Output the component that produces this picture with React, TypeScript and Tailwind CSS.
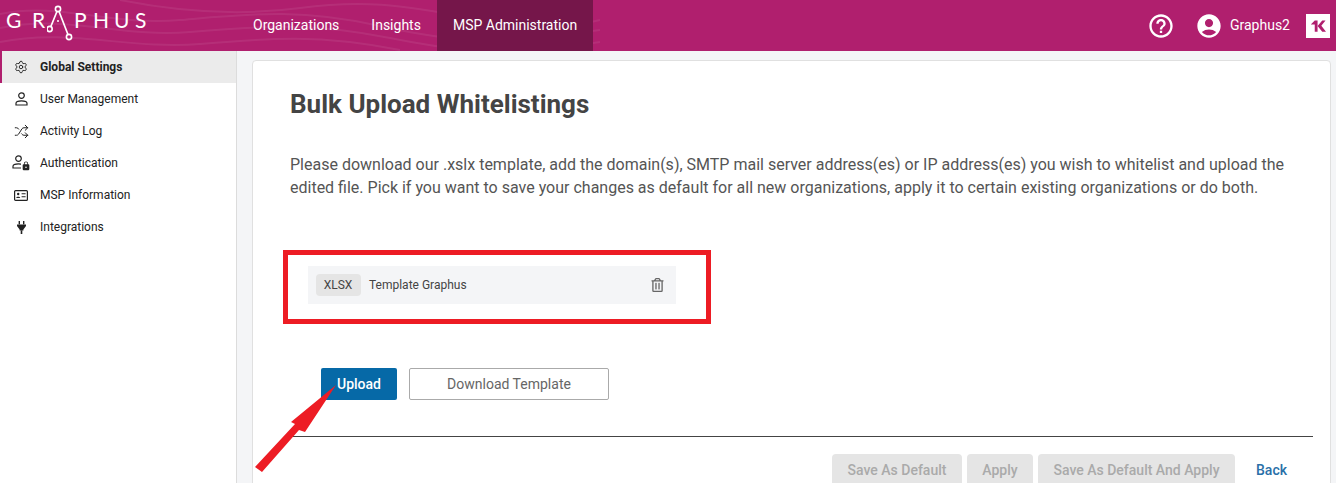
import { Settings, Shuffle } from 'lucide-react';
import { MdHelpOutline, MdAccountCircle, MdLock } from 'react-icons/md';
import { FaRegTrashAlt } from 'react-icons/fa';

function UserIcon() {
  return (
    <svg className="w-[13px] h-[14px] shrink-0" viewBox="0 0 13 14" fill="none" stroke="currentColor" strokeWidth="1.2">
      <circle cx="6.5" cy="3.6" r="2.8" />
      <path d="M1 13 V11.2 C1 9.6 3.4 8.8 6.5 8.8 S12 9.6 12 11.2 V13 Z" />
    </svg>
  );
}

function UserLockIcon() {
  return (
    <span className="relative flex w-[16px] h-[14px] shrink-0">
      <span className="absolute left-[-1px] top-[-1px]">
        <UserIcon />
      </span>
      <MdLock className="absolute right-[-2px] bottom-[-1px] w-[10px] h-[10px] bg-white" />
    </span>
  );
}

function CardIcon() {
  return (
    <svg className="w-[14px] h-[11px] shrink-0" viewBox="0 0 14 11" fill="none" stroke="currentColor">
      <rect x="0.6" y="0.6" width="12.8" height="9.8" rx="1" strokeWidth="1.2" />
      <circle cx="4.2" cy="4" r="1.2" fill="currentColor" stroke="none" />
      <path d="M2.2 8 C2.2 6.4 6.2 6.4 6.2 8 Z" fill="currentColor" stroke="none" />
      <path d="M7.6 3.8 H11.6 M7.6 6.8 H11.6" strokeWidth="1.1" />
    </svg>
  );
}

function PlugIcon() {
  return (
    <svg className="w-[9px] h-[13px] shrink-0" viewBox="0 0 9 13" fill="currentColor">
      <rect x="1.6" y="0" width="1.4" height="3.4" />
      <rect x="6" y="0" width="1.4" height="3.4" />
      <path d="M0 3.4 H9 V5 L6.4 8.6 V9.4 H2.6 V8.6 L0 5 Z" />
      <rect x="3.7" y="9.4" width="1.6" height="3.6" />
    </svg>
  );
}

const navItems = [
  { label: 'Global Settings', icon: <Settings className="w-[14px] h-[14px] shrink-0" strokeWidth={1.6} />, active: true },
  { label: 'User Management', icon: <UserIcon /> },
  { label: 'Activity Log', icon: <Shuffle className="w-[15px] h-[15px] shrink-0" strokeWidth={1.6} /> },
  { label: 'Authentication', icon: <UserLockIcon /> },
  { label: 'MSP Information', icon: <CardIcon /> },
  { label: 'Integrations', icon: <PlugIcon /> },
];

function HeaderWaves() {
  return (
    <svg className="absolute left-0 top-0 w-[600px] h-[51px]" viewBox="0 0 600 51" fill="none" stroke="#fff" strokeOpacity="0.07" strokeWidth="2">
      <path d="M0 14 C60 2 110 26 180 20 S300 8 380 26 S500 44 600 30" />
      <path d="M0 28 C70 14 120 38 190 32 S310 22 390 38 S510 56 600 42" />
      <path d="M0 42 C70 28 130 50 200 44 S320 34 400 50" />
      <path d="M120 0 C180 12 240 16 300 8 S400 4 470 18 S560 30 600 20" />
    </svg>
  );
}

function LogoA() {
  return (
    <svg className="w-[28px] h-[42px] shrink-0" viewBox="0 0 28 42" fill="none" stroke="#fff" strokeWidth="1.6">
      <circle cx="11" cy="9" r="2.6" />
      <circle cx="2.6" cy="29" r="2.6" />
      <circle cx="22" cy="37" r="2.6" />
      <path d="M10 11.4 L3.8 26.6 M12 11.4 L21 34.6" />
      <circle cx="11" cy="21" r="1" fill="#fff" stroke="none" />
    </svg>
  );
}

function KLogo() {
  return (
    <div className="w-6 h-6 bg-white flex items-center justify-center">
      <svg className="w-[15px] h-[12px]" viewBox="0 0 16 12" fill="#b01f6e">
        <path d="M0 4 L4 0 H7 V12 H4 V4.5 H0 Z" />
        <path d="M7 6 L12 0 H15.5 L11 5.8 L16 12 H12 Z" />
      </svg>
    </div>
  );
}

export default function App() {
  return (
    <div className="relative w-[1336px] h-[483px] overflow-hidden bg-[#f4f5f7] font-['Roboto',sans-serif]">
      {/* Header */}
      <header className="relative h-[51px] bg-[#b01f6e] flex items-center text-white overflow-hidden">
        <HeaderWaves />
        <div className="relative w-[237px] mb-[9px] pl-[6px] flex items-center font-['Lato',sans-serif] text-[21px] text-white">
          <span className="w-[26px] pb-[3px]">G</span>
          <span className="w-[15px] pb-[3px]">R</span>
          <LogoA />
          <span className="w-[19px] pb-[3px] -ml-[1px]">P</span>
          <span className="w-[21px] pb-[3px]">H</span>
          <span className="w-[21px] pb-[3px]">U</span>
          <span className="pb-[3px]">S</span>
        </div>
        <nav className="relative flex h-full text-[14px]">
          <a className="px-4 flex items-center">Organizations</a>
          <a className="px-4 flex items-center">Insights</a>
          <a className="px-4 flex items-center bg-[#75164a]">MSP Administration</a>
        </nav>
        <div className="relative ml-auto flex items-center pr-[6px]">
          <MdHelpOutline className="w-7 h-7" />
          <MdAccountCircle className="w-7 h-7 ml-5" />
          <span className="text-[14px] ml-[7px] mr-[16px]">Graphus2</span>
          <KLogo />
        </div>
      </header>

      <div className="flex h-[432px]">
        {/* Sidebar */}
        <aside className="w-[237px] shrink-0 bg-white border-r border-[#dcdcdc] text-[12px] text-[#222]">
          {navItems.map((item) => (
            <div
              key={item.label}
              className={
                item.active
                  ? 'h-8 flex items-center bg-[#ebebeb] border-l-2 border-[#b01f6e] pl-3 font-bold'
                  : 'h-8 flex items-center border-l-2 border-transparent pl-3'
              }
            >
              <span className="w-[14px] flex justify-center">{item.icon}</span>
              <span className="ml-3">{item.label}</span>
            </div>
          ))}
        </aside>

        {/* Main card */}
        <main className="flex-1 pl-[15px] pr-[5px] pt-[9px]">
          <div className="h-[500px] bg-white border border-[#e0e0e0] rounded-sm pl-[37px] pr-[17px]">
            <h1 className="mt-[27px] text-[26px] leading-[32px] font-bold text-[#444]">Bulk Upload Whitelistings</h1>
            <p className="mt-[33px] text-[16px] leading-[23px] text-[#555] w-[1005px]">
              Please download our .xslx template, add the domain(s), SMTP mail server address(es) or IP address(es) you wish to whitelist and upload the edited file. Pick if you want to save your changes as default for all new organizations, apply it to certain existing organizations or do both.
            </p>

            <div className="mt-[67px] ml-[18px] w-[368px] h-[38px] bg-[#f4f5f7] flex items-center pl-2 pr-[12px] text-[12px] text-[#444]">
              <span className="w-[45px] h-[22px] bg-[#e5e5e5] rounded-sm flex items-center justify-center pr-[1px]">XLSX</span>
              <span className="ml-2">Template Graphus</span>
              <FaRegTrashAlt className="ml-auto w-[13px] h-[14px] text-[#666]" />
            </div>

            <div className="mt-[64px] ml-[31px] flex gap-3">
              <button className="w-[76px] h-8 bg-[#0669a7] rounded-[2px] text-white text-[14px] font-medium">Upload</button>
              <button className="w-[200px] h-8 bg-white border border-[#aaa] rounded-[2px] text-[#666] text-[14px]">Download Template</button>
            </div>

            <hr className="mt-[36px] border-t border-[#444]" />

            <div className="mt-[17px] flex justify-end items-center text-[14px] font-medium">
              <button className="w-[130px] h-8 bg-[#e5e5e5] rounded-sm text-[#aaa]">Save As Default</button>
              <button className="w-[66px] h-8 ml-[5px] bg-[#e5e5e5] rounded-sm text-[#aaa]">Apply</button>
              <button className="w-[197px] h-8 ml-[5px] bg-[#e5e5e5] rounded-sm text-[#aaa]">Save As Default And Apply</button>
              <a className="ml-[21px] mr-[26px] text-[#2a70a8]">Back</a>
            </div>
          </div>
        </main>
      </div>

      {/* Annotations */}
      <div className="absolute left-[283px] top-[250px] w-[428px] h-[74px] border-[5px] border-[#ed1c24]" />
      <svg className="absolute left-0 top-0 w-[1336px] h-[483px] pointer-events-none" viewBox="0 0 1336 483">
        <polygon points="336,385 305,432 299,430 262,472 255,467 295,424 291,422" fill="#ed1c24" />
      </svg>
    </div>
  );
}
